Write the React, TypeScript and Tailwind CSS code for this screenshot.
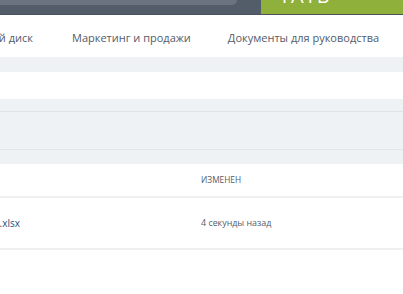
export default function App() {
  const font = { fontFamily: '"Open Sans", "Liberation Sans", sans-serif' }
  return (
    <div className="w-[403px] h-[294px] overflow-hidden bg-white" style={font}>
      {/* top bar */}
      <div className="flex h-[15px] bg-[#535c69] border-b border-[#4a525e]">
        <div className="w-[237px] h-[5px] bg-[#6b737f] rounded-br-[5px]" />
        <div className="w-[24px]" />
        <div className="flex-1 bg-[#8fb03a] overflow-hidden relative">
          <span className="absolute left-[18px] -top-[14px] text-[20px] leading-[20px] text-white tracking-[1px]">ТАТЬ</span>
        </div>
      </div>

      {/* tabs */}
      <div className="flex items-center h-[42px] pt-[5px] text-[11px] text-[#535c69] whitespace-nowrap">
        <div className="w-[33px] overflow-hidden flex justify-end">
          <span>Мой диск</span>
        </div>
        <span className="ml-[39px]">Маркетинг и продажи</span>
        <span className="ml-[37px]">Документы для руководства</span>
      </div>

      <div className="h-[15px] bg-[#eef2f4]" />
      <div className="h-[27px] bg-white" />
      <div className="h-[12px] bg-[#eef2f4]" />
      <div className="h-[38px] bg-[#eef2f4] border-t border-[#dfe3e7]" />
      <div className="h-[15px] bg-[#eef2f4] border-t border-[#e3e6e9]" />

      {/* table header */}
      <div className="flex items-center h-[34px] border-b-2 border-[#eef0f2] text-[8.3px] uppercase text-[#535c69]">
        <div className="w-[201px]" />
        <span>Изменен</span>
      </div>

      {/* row */}
      <div className="flex items-center h-[52px] border-b-2 border-[#eef0f2] whitespace-nowrap">
        <div className="w-[20px] overflow-hidden flex justify-end text-[10px] text-[#2a4f80]">
          <span>Отчет.xlsx</span>
        </div>
        <div className="w-[181px]" />
        <span className="text-[8.9px] text-[#535c69]">4 секунды назад</span>
      </div>
    </div>
  )
}
